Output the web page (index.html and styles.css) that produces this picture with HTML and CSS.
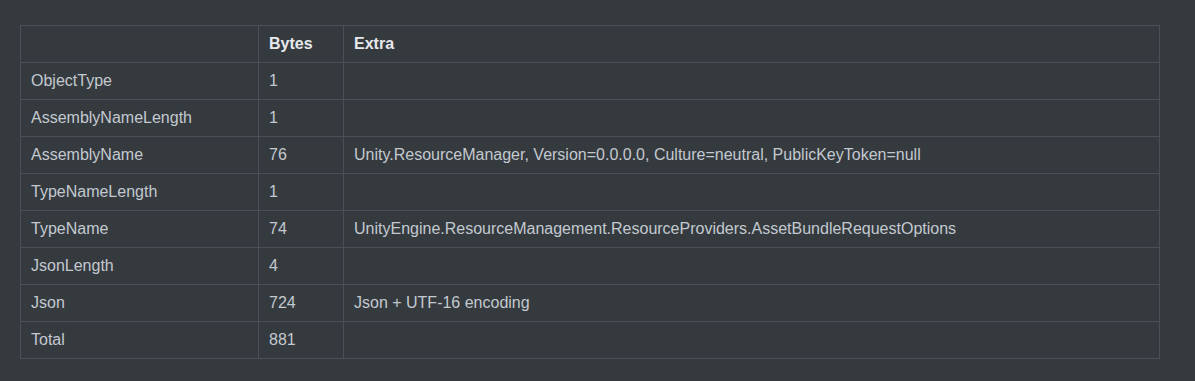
FILE: index.html
```html
<!DOCTYPE html>
<html>
<head>
<meta charset="utf-8">
<link rel="stylesheet" href="styles.css">
</head>
<body>
<div class="wrap">
<table class="tbl">
<thead>
<tr><th class="c1"></th><th class="c2">Bytes</th><th class="c3">Extra</th></tr>
</thead>
<tbody>
<tr><td>ObjectType</td><td>1</td><td></td></tr>
<tr><td>AssemblyNameLength</td><td>1</td><td></td></tr>
<tr><td>AssemblyName</td><td>76</td><td>Unity.ResourceManager, Version=0.0.0.0, Culture=neutral, PublicKeyToken=null</td></tr>
<tr><td>TypeNameLength</td><td>1</td><td></td></tr>
<tr><td>TypeName</td><td>74</td><td>UnityEngine.ResourceManagement.ResourceProviders.AssetBundleRequestOptions</td></tr>
<tr><td>JsonLength</td><td>4</td><td></td></tr>
<tr><td>Json</td><td>724</td><td>Json + UTF-16 encoding</td></tr>
<tr><td>Total</td><td>881</td><td></td></tr>
</tbody>
</table>
</div>
</body>
</html>
```
FILE: styles.css
```css
html, body {
  margin: 0;
  background: #353a3f;
}
.wrap {
  padding: 25px 36px 0 20px;
}
.tbl {
  border-collapse: collapse;
  width: 1140px;
  font-family: "Liberation Sans", Arial, sans-serif;
  font-size: 16px;
  color: #c3c9cf;
}
.tbl th, .tbl td {
  border: 1px solid #4b5056;
  height: 37px;
  padding: 0 10px;
  text-align: left;
  vertical-align: middle;
  box-sizing: border-box;
}
.tbl th {
  font-weight: bold;
  color: #e6e9ec;
}
.c1 { width: 238px; }
.c2 { width: 85px; }
```
